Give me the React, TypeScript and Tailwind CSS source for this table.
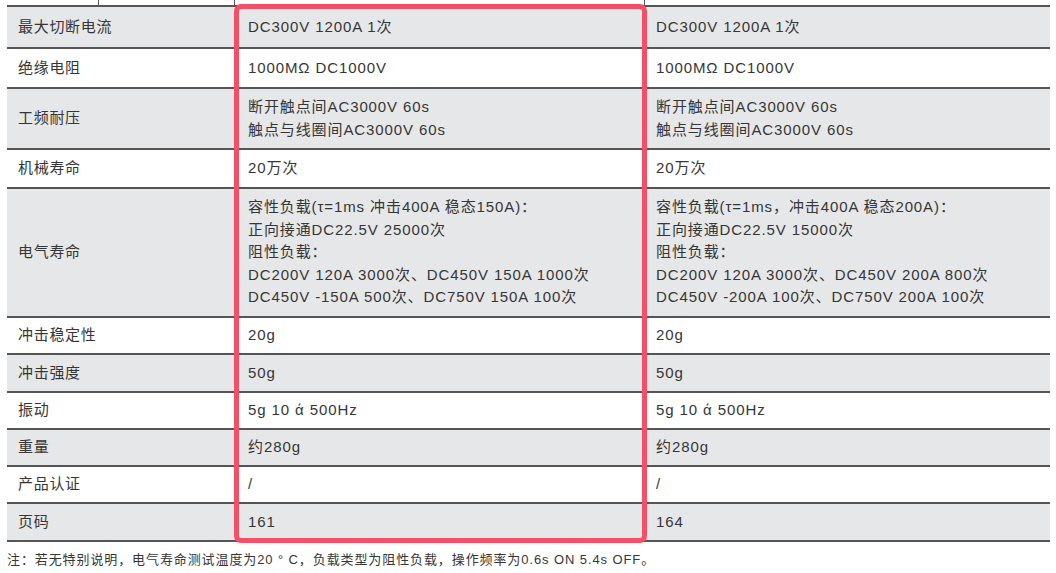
const rows: { label: string; a: string[]; b: string[]; h: string; gray: boolean }[] = [
  { label: '最大切断电流', a: ['DC300V 1200A 1次'], b: ['DC300V 1200A 1次'], h: 'h-[42px]', gray: true },
  { label: '绝缘电阻', a: ['1000MΩ DC1000V'], b: ['1000MΩ DC1000V'], h: 'h-[40px]', gray: false },
  {
    label: '工频耐压',
    a: ['断开触点间AC3000V 60s', '触点与线圈间AC3000V 60s'],
    b: ['断开触点间AC3000V 60s', '触点与线圈间AC3000V 60s'],
    h: 'h-[61px]',
    gray: true,
  },
  { label: '机械寿命', a: ['20万次'], b: ['20万次'], h: 'h-[39px]', gray: false },
  {
    label: '电气寿命',
    a: [
      '容性负载(τ=1ms 冲击400A 稳态150A)：',
      '正向接通DC22.5V 25000次',
      '阻性负载：',
      'DC200V 120A 3000次、DC450V 150A 1000次',
      'DC450V -150A 500次、DC750V 150A 100次',
    ],
    b: [
      '容性负载(τ=1ms，冲击400A 稳态200A)：',
      '正向接通DC22.5V 15000次',
      '阻性负载：',
      'DC200V 120A 3000次、DC450V 200A 800次',
      'DC450V -200A 100次、DC750V 200A 100次',
    ],
    h: 'h-[129px]',
    gray: true,
  },
  { label: '冲击稳定性', a: ['20g'], b: ['20g'], h: 'h-[37px]', gray: false },
  { label: '冲击强度', a: ['50g'], b: ['50g'], h: 'h-[38px]', gray: true },
  { label: '振动', a: ['5g 10 ά 500Hz'], b: ['5g 10 ά 500Hz'], h: 'h-[37px]', gray: false },
  { label: '重量', a: ['约280g'], b: ['约280g'], h: 'h-[37px]', gray: true },
  { label: '产品认证', a: ['/'], b: ['/'], h: 'h-[37px]', gray: false },
  { label: '页码', a: ['161'], b: ['164'], h: 'h-[38px]', gray: true },
];

export default function App() {
  return (
    <div
      className="relative w-[1056px] h-[573px] bg-white text-[#363636] overflow-hidden"
      style={{ fontFamily: '"Liberation Sans", "Noto Sans CJK SC", sans-serif' }}
    >
      <div className="pl-[7px] w-[1050px]">
        {/* tail of the row above */}
        <div className="flex h-[5px]">
          <div className="w-[92px] border-r border-[#555]"></div>
          <div className="w-[136px] border-r border-[#555]"></div>
          <div className="w-[410px] border-r border-[#555]"></div>
          <div className="flex-1"></div>
        </div>

        {rows.map((r) => (
          <div
            key={r.label}
            className={`flex border-t-2 border-[#555] ${r.h} ${r.gray ? 'bg-[#e6e7e8]' : 'bg-white'}`}
          >
            <div className="w-[228px] pl-[11px] flex items-center text-[15px] tracking-[0.7px]">{r.label}</div>
            <div className="w-[410px] pl-[13px] flex flex-col justify-center text-[15px] tracking-[0.9px] leading-[22.5px]">
              {r.a.map((t) => (
                <div key={t} className="whitespace-nowrap">{t}</div>
              ))}
            </div>
            <div className="flex-1 pl-[11px] flex flex-col justify-center text-[15px] tracking-[0.9px] leading-[22.5px]">
              {r.b.map((t) => (
                <div key={t} className="whitespace-nowrap">{t}</div>
              ))}
            </div>
          </div>
        ))}
        <div className="border-t-2 border-[#555]"></div>

        <div className="mt-[8px] text-[13px] tracking-[0.9px] whitespace-nowrap">
          注：若无特别说明，电气寿命测试温度为20 ° C，负载类型为阻性负载，操作频率为0.6s ON 5.4s OFF。
        </div>
      </div>

      {/* highlight frame */}
      <div className="absolute left-[234px] top-[4px] w-[413px] h-[539px] border-[5px] border-[#f44f67] rounded-[7px]"></div>
    </div>
  );
}
